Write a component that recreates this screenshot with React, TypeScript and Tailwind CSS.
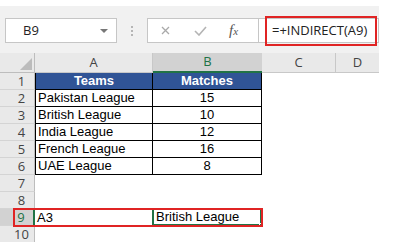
import { Fragment } from 'react';

const rows: { n: number; a?: string; b?: string }[] = [
  { n: 2, a: 'Pakistan League', b: '15' },
  { n: 3, a: 'British League', b: '10' },
  { n: 4, a: 'India League', b: '12' },
  { n: 5, a: 'French League', b: '16' },
  { n: 6, a: 'UAE League', b: '8' },
];

const ui = { fontFamily: '"Open Sans", "Noto Sans", sans-serif' };
const cell = { fontFamily: '"Liberation Sans", Arial, sans-serif' };

function RowHead({ n, selected }: { n: number; selected?: boolean }) {
  return (
    <div
      className={`w-[35px] h-[17px] shrink-0 flex items-center justify-center pl-[9px] text-[13px] leading-none border-b border-[#d4d4d4] ${
        selected
          ? 'bg-[#d2d2d2] text-[#217346] border-r-2 border-r-[#217346]'
          : 'bg-[#e9e9e9] text-[#444] border-r border-r-[#bdbdbd]'
      }`}
      style={ui}
    >
      {n}
    </div>
  );
}

function FormulaBar() {
  return (
    <div className="h-[47px] bg-[#f1f1f1] flex items-start pt-[12px] pl-[5px]">
      <div className="w-[112px] h-[25px] bg-white border border-[#c6c6c6] flex items-center pl-[17px] pr-[8px] justify-between">
        <span className="text-[13px] text-[#222]" style={ui}>B9</span>
        <span className="w-0 h-0 border-l-[4px] border-r-[4px] border-t-[4px] border-l-transparent border-r-transparent border-t-[#777]" />
      </div>
      <div className="w-[30px] h-[25px] flex flex-col items-center justify-center gap-[2px]">
        <span className="w-[2px] h-[2px] bg-[#b5b5b5]" />
        <span className="w-[2px] h-[2px] bg-[#b5b5b5]" />
        <span className="w-[2px] h-[2px] bg-[#b5b5b5]" />
      </div>
      <div className="w-[111px] h-[25px] bg-white border border-[#c6c6c6] border-r-0 flex items-center">
        <svg className="ml-[13px]" width="9" height="9" viewBox="0 0 9 9">
          <path d="M1 1 L8 8 M8 1 L1 8" stroke="#a9a9a9" strokeWidth="1.3" />
        </svg>
        <svg className="ml-[24px]" width="13" height="10" viewBox="0 0 13 10">
          <path d="M1 5 L5 9 L12 1" stroke="#b4b4b4" strokeWidth="1.6" fill="none" />
        </svg>
        <span className="ml-[22px] italic text-[15px] text-[#555] leading-none" style={{ fontFamily: '"Liberation Serif", serif' }}>
          f<span className="text-[11px]">x</span>
        </span>
      </div>
      <div className="w-[121px] h-[25px] bg-white border border-[#c6c6c6] relative">
        <div className="absolute left-[6px] top-[-3px] w-[112px] h-[30px] border-2 border-[#e02424] flex items-center pl-[5px]">
          <span className="text-[13px] text-[#222] whitespace-nowrap" style={ui}>=+INDIRECT(A9)</span>
        </div>
      </div>
    </div>
  );
}

export default function App() {
  return (
    <div className="w-[397px] h-[242px] bg-white overflow-hidden">
      <div className="w-[379px] pt-[6px]">
        <FormulaBar />

        {/* column headers */}
        <div className="flex h-[20px] bg-[#e9e9e9]" style={ui}>
          <div className="w-[35px] h-[20px] border-r border-b border-[#bdbdbd] flex items-end justify-end p-[2px]">
            <span className="w-0 h-0" style={{ borderBottom: '12px solid #bcbcbc', borderLeft: '12px solid transparent' }} />
          </div>
          <div className="w-[118px] flex items-center justify-center text-[13px] text-[#444] border-r border-b border-[#c8c8c8]">A</div>
          <div className="w-[109px] flex items-center justify-center text-[13px] text-[#217346] bg-[#d2d2d2] border-b-2 border-[#217346]">B</div>
          <div className="w-[74px] flex items-center justify-center text-[13px] text-[#444] border-r border-b border-[#c8c8c8]">C</div>
          <div className="w-[43px] flex items-center justify-center text-[13px] text-[#444] border-b border-[#c8c8c8]">D</div>
        </div>

        {/* row 1 header */}
        <div className="flex">
          <RowHead n={1} />
          <div className="w-[118px] h-[17px] bg-[#305496] border-x border-b border-black flex items-center justify-center text-[13px] font-bold text-white" style={cell}>
            Teams
          </div>
          <div className="w-[109px] h-[17px] bg-[#305496] border-r border-b border-black flex items-center justify-center text-[13px] font-bold text-white" style={cell}>
            Matches
          </div>
        </div>

        {rows.map((r) => (
          <Fragment key={r.n}>
            <div className="flex">
              <RowHead n={r.n} />
              <div className="w-[118px] h-[17px] border-x border-b border-black flex items-center pl-[2px] text-[13px] text-black" style={cell}>
                {r.a}
              </div>
              <div className="w-[109px] h-[17px] border-r border-b border-black flex items-center justify-center text-[13px] text-black" style={cell}>
                {r.b}
              </div>
            </div>
          </Fragment>
        ))}

        <div className="flex"><RowHead n={7} /></div>
        <div className="flex"><RowHead n={8} /></div>

        {/* row 9 with selection */}
        <div className="flex relative">
          <RowHead n={9} selected />
          <div className="w-[118px] h-[17px] flex items-center pl-[2px] text-[13px] text-black" style={cell}>
            A3
          </div>
          <div className="w-[110px] h-[18px] -mt-[1px] -ml-[1px] border-2 border-[#217346] flex items-center pl-[2px] text-[13px] text-black relative" style={cell}>
            British League
            <span className="absolute right-[-4px] bottom-[-4px] w-[5px] h-[5px] bg-[#217346] border border-white" />
          </div>
          <div className="absolute left-[13px] top-[-1px] w-[250px] h-[19px] border-2 border-[#e02424] pointer-events-none" />
        </div>

        <div className="flex"><RowHead n={10} /></div>
      </div>
    </div>
  );
}
